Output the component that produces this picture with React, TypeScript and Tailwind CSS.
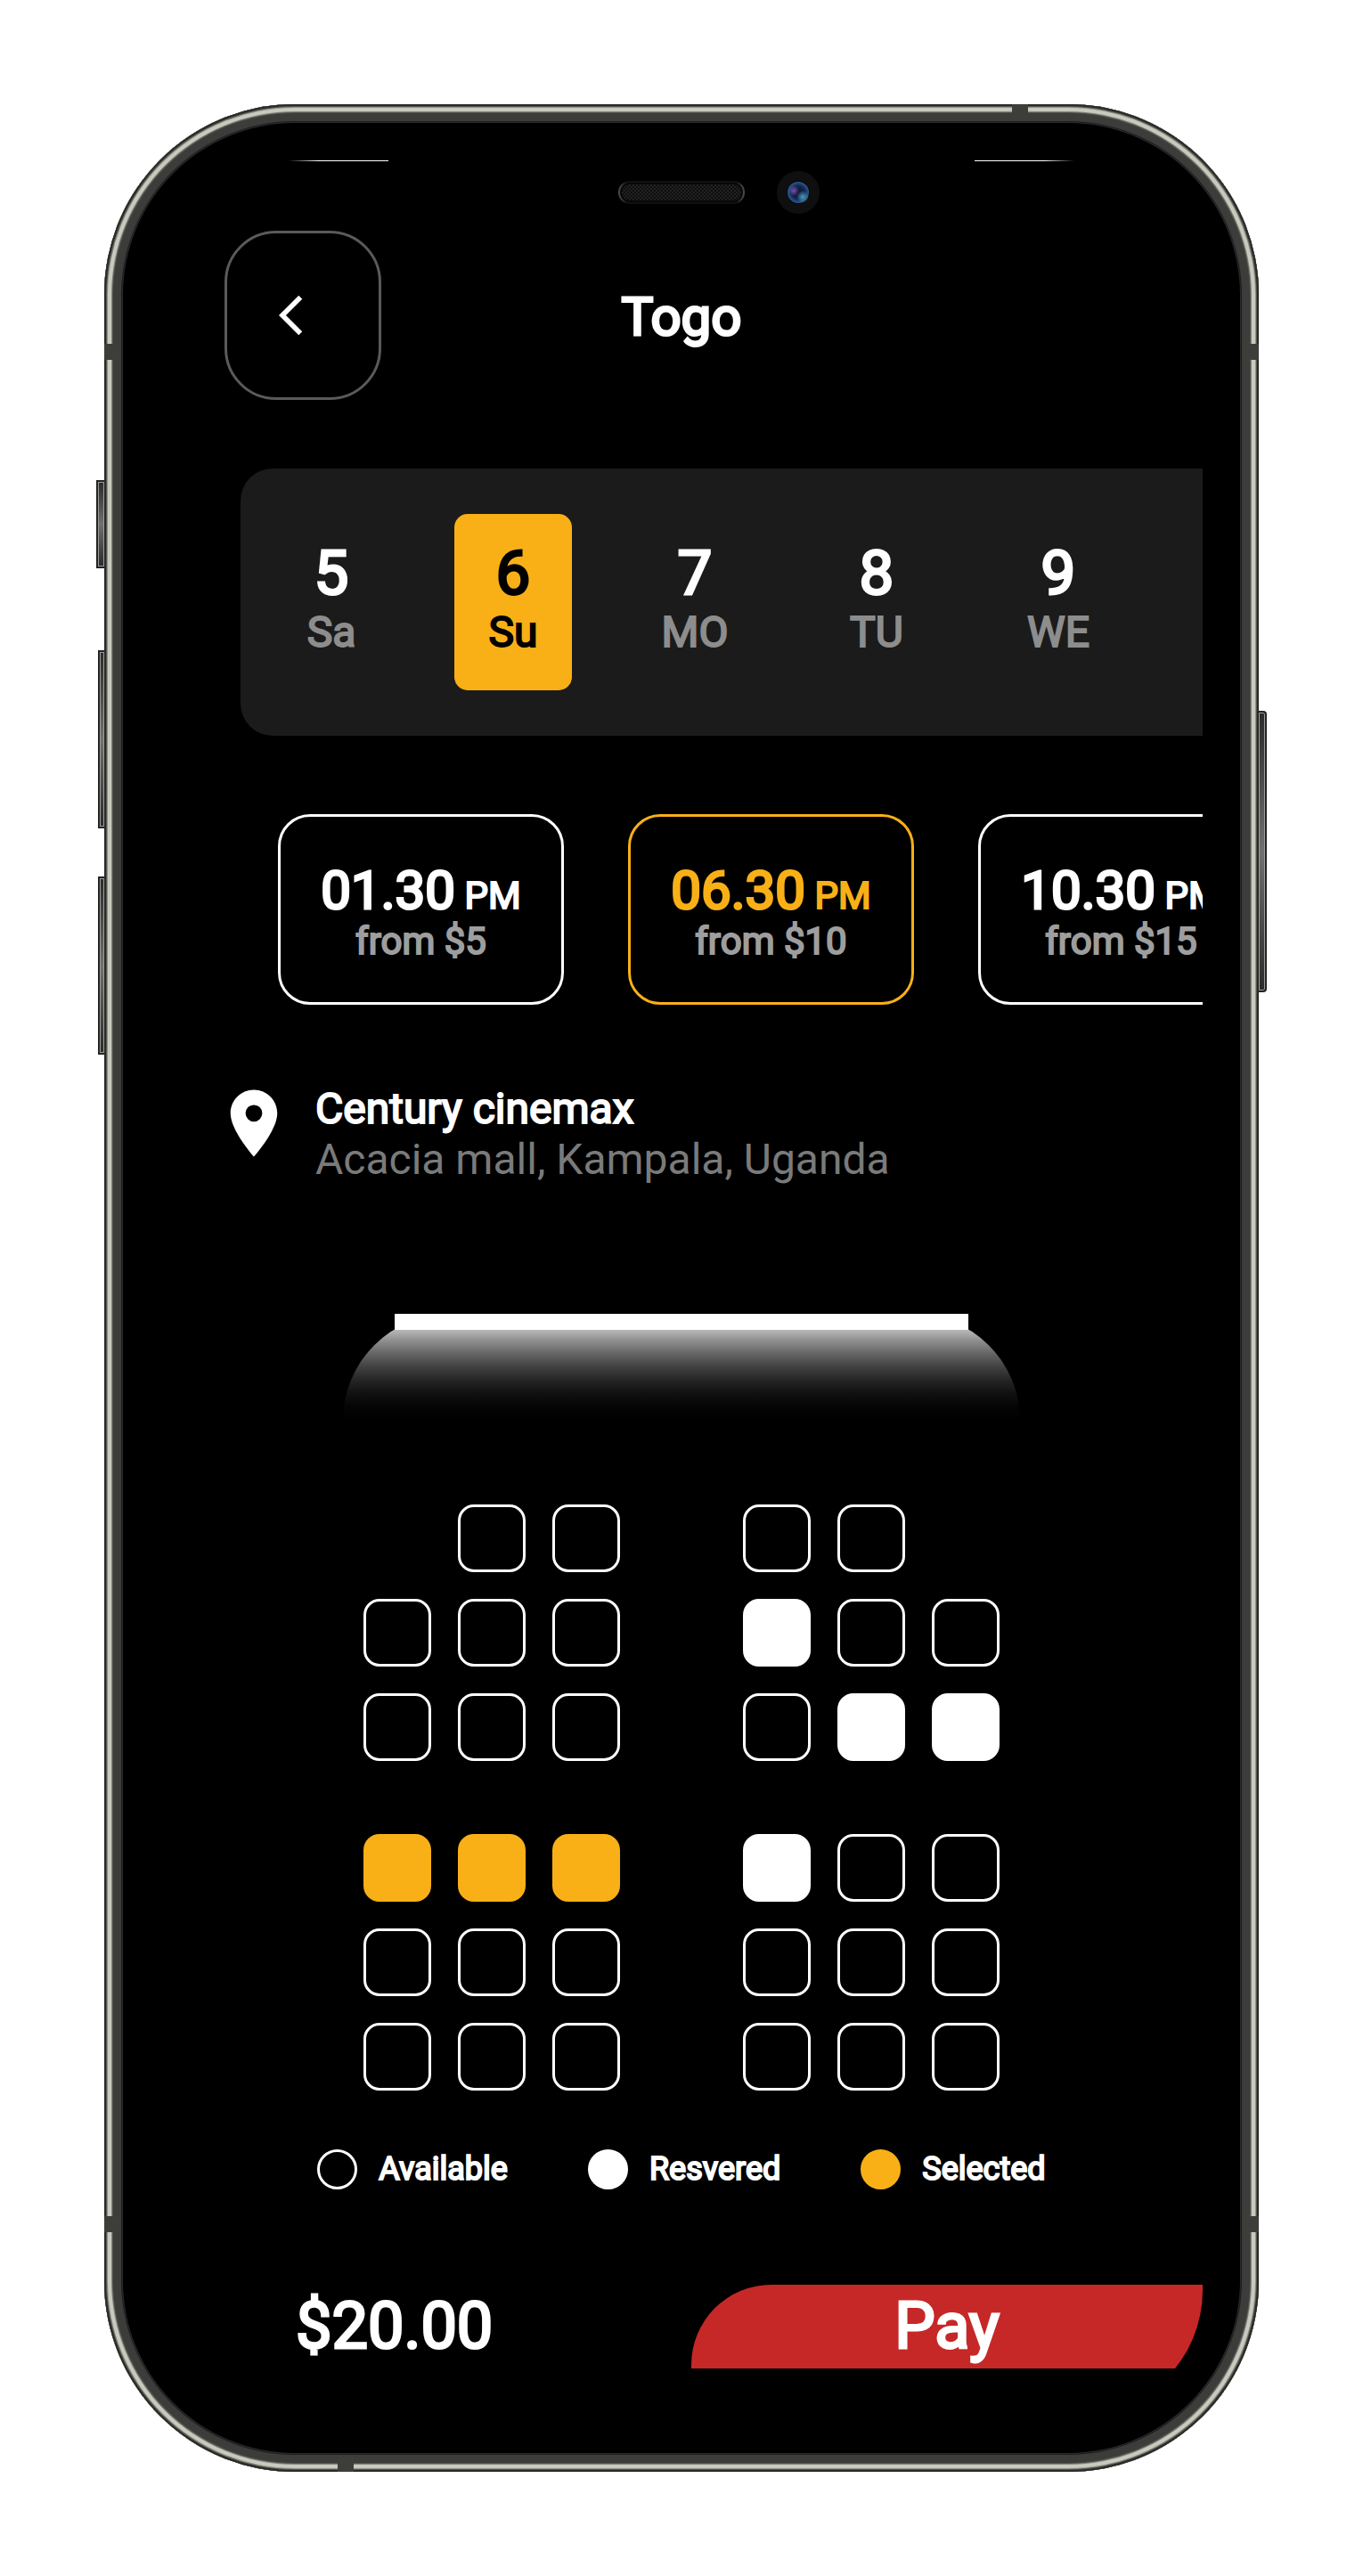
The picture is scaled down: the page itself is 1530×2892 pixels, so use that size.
import { useState } from "react";

type SeatState = "available" | "reserved" | "selected" | "none";

const dates = [
  { day: "5", name: "Sa" },
  { day: "6", name: "Su" },
  { day: "7", name: "MO" },
  { day: "8", name: "TU" },
  { day: "9", name: "WE" },
];

const showtimes = [
  { time: "01.30", price: "from $5" },
  { time: "06.30", price: "from $10" },
  { time: "10.30", price: "from $15" },
];

const code: Record<string, SeatState> = {
  a: "available",
  r: "reserved",
  s: "selected",
  _: "none",
};

/* Each block holds three rows; the space marks the aisle. */
const blocks = [
  ["_aa aa_", "aaa raa", "aaa arr"],
  ["sss raa", "aaa aaa", "aaa aaa"],
];

/* Heavier strokes on the regular face keep its compact widths. */
const heavy = "[-webkit-text-stroke-width:2px]";
const heavier = "[-webkit-text-stroke-width:3px]";

function SideButton({ className }: { className: string }) {
  return (
    <div
      className={`absolute border-2 border-[#222422] bg-gradient-to-b from-[#2b2b2a] via-[#6f716d] to-[#2b2b2a] shadow-[inset_0_0_0_1px_#9a9d98] ${className}`}
    />
  );
}

function Band({ className }: { className: string }) {
  return <div className={`absolute bg-[#3d3d3a] ${className}`} />;
}

function Hardware() {
  return (
    <div aria-hidden="true">
      <SideButton className="-left-[9px] top-[422px] h-[99px] w-[9px] border-r-0" />
      <SideButton className="-left-[7px] top-[613px] h-[200px] w-[7px] border-r-0" />
      <SideButton className="-left-[7px] top-[867px] h-[200px] w-[7px] border-r-0" />
      <SideButton className="-right-[9px] top-[681px] h-[316px] w-[9px] rounded-r-sm border-l-0" />
      <Band className="left-0 top-[269px] h-[18px] w-[19px]" />
      <Band className="right-0 top-[269px] h-[18px] w-[19px]" />
      <Band className="bottom-[269px] left-0 h-[18px] w-[19px]" />
      <Band className="bottom-[269px] right-0 h-[18px] w-[19px]" />
      <Band className="right-[259px] top-0 h-[19px] w-[18px]" />
      <Band className="bottom-0 left-[262px] h-[19px] w-[18px]" />
    </div>
  );
}

function Notch() {
  return (
    <div className="mt-[11px] grid h-12 grid-cols-[1fr_142px_1fr] items-center" aria-hidden="true">
      <svg className="col-start-2 h-[26px] w-full" viewBox="0 0 142 26">
        <defs>
          <pattern id="mesh" width="4" height="4" patternUnits="userSpaceOnUse">
            <rect width="4" height="4" fill="#0e0e0e" />
            <rect width="2" height="2" fill="#222222" />
            <rect x="2" y="2" width="2" height="2" fill="#222222" />
          </pattern>
          <linearGradient id="rim" x1="0" x2="1" y1="0" y2="0">
            <stop offset="0" stopColor="#4a4a4a" />
            <stop offset="0.06" stopColor="#101010" />
            <stop offset="0.94" stopColor="#101010" />
            <stop offset="1" stopColor="#4a4a4a" />
          </linearGradient>
        </defs>
        <rect x="1" y="1" width="140" height="24" rx="12" fill="#080808" stroke="url(#rim)" strokeWidth="2" />
        <rect x="4" y="4" width="134" height="18" rx="9" fill="url(#mesh)" />
      </svg>
      <svg className="ml-9 h-12 w-12" viewBox="0 0 48 48">
        <defs>
          <radialGradient id="violet">
            <stop offset="0" stopColor="#7a4fb0" />
            <stop offset="1" stopColor="#7a4fb0" stopOpacity="0" />
          </radialGradient>
          <radialGradient id="cyan">
            <stop offset="0" stopColor="#4c9cc0" />
            <stop offset="1" stopColor="#4c9cc0" stopOpacity="0" />
          </radialGradient>
          <radialGradient id="lens">
            <stop offset="0" stopColor="#0c1430" />
            <stop offset="0.6" stopColor="#15244c" />
            <stop offset="1" stopColor="#2b5a92" />
          </radialGradient>
        </defs>
        <circle cx="24" cy="24" r="24" fill="#0f0f0f" />
        <circle cx="24" cy="24" r="13" fill="#080808" />
        <circle cx="24" cy="24" r="12" fill="url(#lens)" />
        <circle cx="19" cy="22" r="6" fill="url(#violet)" />
        <circle cx="29" cy="29" r="7" fill="url(#cyan)" />
      </svg>
    </div>
  );
}

const seatBase =
  "size-[76px] appearance-none rounded-[18px] border-[3px] checked:border-[#f9b017] checked:bg-[#f9b017]";

function Seat({ state, label }: { state: SeatState; label: string }) {
  if (state === "none") return <span className="size-[76px]" />;
  return (
    <input
      type="checkbox"
      aria-label={label}
      defaultChecked={state === "selected"}
      disabled={state === "reserved"}
      className={`${seatBase} border-white ${state === "reserved" ? "bg-white" : "bg-black"}`}
    />
  );
}

function SeatMap() {
  return (
    <div className="mt-[94px] flex flex-col items-center gap-[82px]">
      {blocks.map((rows, b) => (
        <div key={b} className="flex flex-col gap-[30px]">
          {rows.map((row, r) => (
            <div key={r} className="flex gap-[138px]">
              {row.split(" ").map((side, s) => (
                <div key={s} className="flex gap-[30px]">
                  {side.split("").map((c, i) => (
                    <Seat
                      key={i}
                      state={code[c]}
                      label={`Row ${b * 3 + r + 1}, seat ${s * 3 + i + 1}`}
                    />
                  ))}
                </div>
              ))}
            </div>
          ))}
        </div>
      ))}
    </div>
  );
}

function LegendItem({ label, dot }: { label: string; dot: string }) {
  return (
    <li className="flex items-center gap-6">
      <span className={`size-[45px] rounded-full border-[3px] ${dot}`} />
      <span className={`text-[36px] leading-[45px] ${heavy}`}>{label}</span>
    </li>
  );
}

export default function App() {
  const [date, setDate] = useState(1);
  const [show, setShow] = useState(1);

  return (
    <div className="bg-white p-[117px] font-[Roboto,sans-serif] text-white">
      <div className="relative rounded-[214px] bg-black p-[63px] shadow-[inset_0_0_0_2px_#2a2a28,inset_0_0_0_3px_#55554f,inset_0_0_0_4px_#8d8d83,inset_0_0_0_8px_#c9cabf,inset_0_0_0_9px_#85857b,inset_0_0_0_10px_#55554f,inset_0_0_0_19px_#3c3c3a,inset_0_0_0_20px_#1c1c1c,inset_0_0_0_21px_#2c2c2c]">
        <Hardware />
        <main className="overflow-hidden rounded-[141px] pb-[53px]">
          <div className="flex justify-between px-36" aria-hidden="true">
            <div className="h-px w-28 bg-gradient-to-r from-transparent via-white via-30% to-white" />
            <div className="h-px w-28 bg-gradient-to-l from-transparent via-white via-30% to-white" />
          </div>
          <Notch />

          <header className="mt-[19px] grid grid-cols-[1fr_auto_1fr] items-center px-[72px]">
            <button
              type="button"
              aria-label="Back"
              className="flex h-[190px] w-44 items-center justify-center rounded-[58px] border-[3px] border-[#5a5a5a]"
            >
              <svg className="size-[54px]" viewBox="0 0 24 24" fill="currentColor">
                <path d="M11.67 3.87 9.9 2.1 0 12l9.9 9.9 1.77-1.77L3.54 12z" />
              </svg>
            </button>
            <h1 className={`pt-1 text-[60px] leading-[72px] ${heavier}`}>Togo</h1>
          </header>

          <div className="mt-[77px] ml-[90px] overflow-hidden rounded-l-[36px] bg-[#1b1b1b]">
            <div className="flex w-max gap-[72px] px-9 py-[51px]">
              {dates.map((d, i) => (
                <button
                  key={d.day}
                  type="button"
                  aria-pressed={i === date}
                  onClick={() => setDate(i)}
                  className={`flex h-[198px] w-[132px] flex-col items-center justify-center rounded-[15px] ${
                    i === date ? "bg-[#f9b017] text-black" : "text-white"
                  }`}
                >
                  <span className={`text-[69px] leading-[68px] ${heavier}`}>{d.day}</span>
                  <span
                    className={`text-[48px] leading-[64px] ${heavy} ${
                      i === date ? "text-black" : "text-[#8d8d8d]"
                    }`}
                  >
                    {d.name}
                  </span>
                </button>
              ))}
            </div>
          </div>

          <div className="mt-[88px] ml-[132px] overflow-hidden">
            <div className="flex w-max gap-[72px]">
              {showtimes.map((s, i) => (
                <button
                  key={s.time}
                  type="button"
                  aria-pressed={i === show}
                  onClick={() => setShow(i)}
                  className={`flex h-[214px] w-[321px] flex-col items-center justify-center rounded-[36px] border-[3px] ${
                    i === show ? "border-[#f9b017] text-[#f9b017]" : "border-white text-white"
                  }`}
                >
                  <span className={`text-[60px] leading-[72px] ${heavier}`}>
                    {s.time}
                    <span className={`text-[42px] leading-none ${heavy}`}> PM</span>
                  </span>
                  <span className={`text-[42px] leading-[42px] text-[#9e9e9e] ${heavy}`}>{s.price}</span>
                </button>
              ))}
            </div>
          </div>

          <section className="mt-[88px] flex items-start gap-6 pl-[60px]">
            <svg className="size-[90px] shrink-0" viewBox="0 0 24 24" fill="currentColor" aria-hidden="true">
              <path d="M12 2C8.13 2 5 5.13 5 9c0 5.25 7 13 7 13s7-7.75 7-13c0-3.87-3.13-7-7-7zm0 9.500a2.500 2.500 0 0 1 0-5 2.500 2.500 0 0 1 0 5z" />
            </svg>
            <div className="text-[48px] leading-[57px]">
              <h2 className={heavy}>Century cinemax</h2>
              <p className="text-[#7a7a7a]">Acacia mall, Kampala, Uganda</p>
            </div>
          </section>

          <div className="mx-auto mt-[145px] flex h-[120px] w-[760px] items-start justify-center rounded-t-[120px] bg-[linear-gradient(to_bottom,#ffffff_0%,#c3c3c3_12.5%,#8f8f8f_25%,#646464_37.5%,#404040_50%,#242424_62.5%,#101010_75%,#040404_87.5%,#000000_100%)]">
            <div className="h-[18px] w-[644px] bg-white" />
          </div>

          <SeatMap />

          <ul className="mt-[66px] flex justify-center gap-[90px]">
            <LegendItem label="Available" dot="border-white" />
            <LegendItem label="Resvered" dot="border-white bg-white" />
            <LegendItem label="Selected" dot="border-[#f9b017] bg-[#f9b017]" />
          </ul>

          <div
            className={`mt-[107px] flex items-center justify-between pl-[152px] text-[72px] leading-[94px] ${heavier}`}
          >
            <span>$20.00</span>
            <button type="button" className="w-[574px] rounded-tl-[90px] bg-[#c62828]">
              Pay
            </button>
          </div>
        </main>
      </div>
    </div>
  );
}
